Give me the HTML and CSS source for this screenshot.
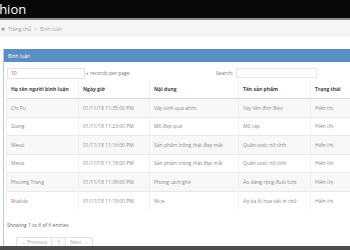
FILE: index.html
```html
<!DOCTYPE html>
<html lang="vi">
<head>
<meta charset="utf-8">
<title>Bình luận</title>
<link rel="stylesheet" href="styles.css">
</head>
<body>
<header class="topbar"><span class="brand">Fashion</span></header>
<nav class="crumbs">
  <svg class="home" viewBox="0 0 10 10" width="4" height="4"><path d="M5 0.5 L0 5 H1.5 V9.5 H4 V6.5 H6 V9.5 H8.5 V5 H10 Z" fill="#999"/></svg>
  <a class="crumb-link">Trang chủ</a><span class="sep">&gt;</span><span class="crumb-cur">Bình luận</span>
</nav>
<main class="content">
  <section class="panel">
    <div class="panel-heading">Bình luận</div>
    <div class="panel-body">
      <div class="controls">
        <div class="length"><span class="select">10</span><span class="caret">▾</span><span class="lbl">records per page</span></div>
        <div class="search"><span class="lbl">Search:</span><span class="input"></span></div>
      </div>
      <table class="grid">
        <colgroup><col class="c1"><col class="c2"><col class="c3"><col class="c4"><col class="c5"></colgroup>
        <thead>
          <tr><th>Họ tên người bình luận</th><th>Ngày giờ</th><th>Nội dung</th><th>Tên sản phẩm</th><th>Trạng thái</th></tr>
        </thead>
        <tbody>
          <tr><td>Chi Pu</td><td>01/11/18 11:35:00 PM</td><td>Vãy xinh quá ahihi</td><td>Váy liền đơn điệu</td><td>Hiển thị</td></tr>
          <tr><td>Giang</td><td>01/11/18 11:23:00 PM</td><td>Mũ đẹp quá</td><td>Mũ cạp</td><td>Hiển thị</td></tr>
          <tr><td>Messi</td><td>01/11/18 11:16:00 PM</td><td>Sản phẩm trông thật đẹp mắt</td><td>Quần soóc nữ tính</td><td>Hiển thị</td></tr>
          <tr><td>Messi</td><td>01/11/18 11:18:00 PM</td><td>Sản phẩm trông thật đẹp mắt</td><td>Quần soóc nữ tính</td><td>Hiển thị</td></tr>
          <tr><td>Phương Trang</td><td>01/11/18 11:39:00 PM</td><td>Phong cách ghê</td><td>Áo dáng rộng đuôi lượt</td><td>Hiển thị</td></tr>
          <tr><td>Rivaldo</td><td>01/11/18 11:19:00 PM</td><td>Nice</td><td>Áo ba lỗ họa tiết in chữ</td><td>Hiển thị</td></tr>
        </tbody>
      </table>
      <div class="info">Showing 1 to 6 of 6 entries</div>
      <div class="pager"><span class="pg">← Previous</span><span class="pg cur">1</span><span class="pg">Next →</span></div>
    </div>
  </section>
</main>
<footer class="bottom"></footer>
</body>
</html>
```
FILE: styles.css
```css
html, body {
  margin: 0;
  overflow: hidden;
}
body {
  width: 350px;
  height: 250px;
  background: #fff;
  font-family: "Open Sans", "Liberation Sans", sans-serif;
  position: relative;
}
.topbar {
  height: 18px;
  background: #080808;
  border-bottom: 2px solid #8a8a8a;
  display: flex;
  align-items: center;
  overflow: hidden;
}
.brand {
  color: #fff;
  font-size: 13px;
  line-height: 1;
  margin-left: -21px;
}
.crumbs {
  height: 17px;
  background: #f5f5f5;
  display: flex;
  align-items: center;
  gap: 3px;
  padding-left: 1px;
  font-size: 5px;
  color: #aaa;
}
.crumb-link { color: #9a9a9a; }
.content {
  padding: 12px 0 0 3px;
}
.panel {
  width: 400px;
  border: 1px solid #b5cbe0;
  border-top-color: #5b8ec2;
}
.panel-heading {
  height: 12px;
  background: #5b8ec2;
  color: #fff;
  font-size: 5px;
  display: flex;
  align-items: center;
  padding-left: 4px;
}
.panel-body {
  padding: 5px 0 0 2px;
}
.controls {
  display: flex;
  align-items: center;
  height: 12px;
  font-size: 5px;
  color: #777;
  padding-left: 1px;
}
.length {
  display: flex;
  align-items: center;
  width: 209px;
}
.select {
  width: 78px;
  height: 11px;
  border: 1px solid #e3e3e3;
  box-sizing: border-box;
  display: flex;
  align-items: center;
  padding-left: 3px;
  color: #666;
}
.caret {
  font-size: 4px;
  color: #888;
  margin: 0 2px 0 1px;
}
.search {
  display: flex;
  align-items: center;
  gap: 3px;
}
.input {
  width: 81px;
  height: 10px;
  border: 1px solid #e8e8e8;
  box-sizing: border-box;
}
.grid {
  margin-top: 1px;
  border-collapse: collapse;
  table-layout: fixed;
  width: 384px;
  font-size: 5px;
}
.c1 { width: 72px; }
.c2 { width: 71px; }
.c3 { width: 89px; }
.c4 { width: 72px; }
.c5 { width: 80px; }
.grid th, .grid td {
  height: 18.5px;
  padding: 0 4px;
  text-align: left;
  white-space: nowrap;
  overflow: hidden;
  box-sizing: border-box;
  border-top: 1px solid #e8e8e8;
  border-left: 1px solid #f0f0f0;
}
.grid th {
  color: #444;
  font-weight: 700;
  border-top: none;
  border-bottom: 1px solid #dcdcdc;
}
.grid td { color: #8a8a8a; }
.grid tbody tr:nth-child(odd) { background: #f8f8f8; }
.info {
  margin-top: 11px;
  height: 8px;
  line-height: 8px;
  font-size: 5px;
  color: #666;
  padding-left: 1px;
}
.pager {
  margin-top: 8px;
  margin-left: 11px;
  display: flex;
  font-size: 5px;
  color: #aaa;
}
.pg {
  height: 11px;
  padding: 0 4px;
  border: 1px solid #e2e2e2;
  margin-left: -1px;
  display: flex;
  align-items: center;
  box-sizing: border-box;
}
.pg.cur {
  padding: 0 5px;
  color: #999;
  background: #fafafa;
}
.bottom {
  position: fixed;
  left: 0;
  right: 0;
  bottom: 0;
  height: 4px;
  background: #4d4d4d;
}
```
